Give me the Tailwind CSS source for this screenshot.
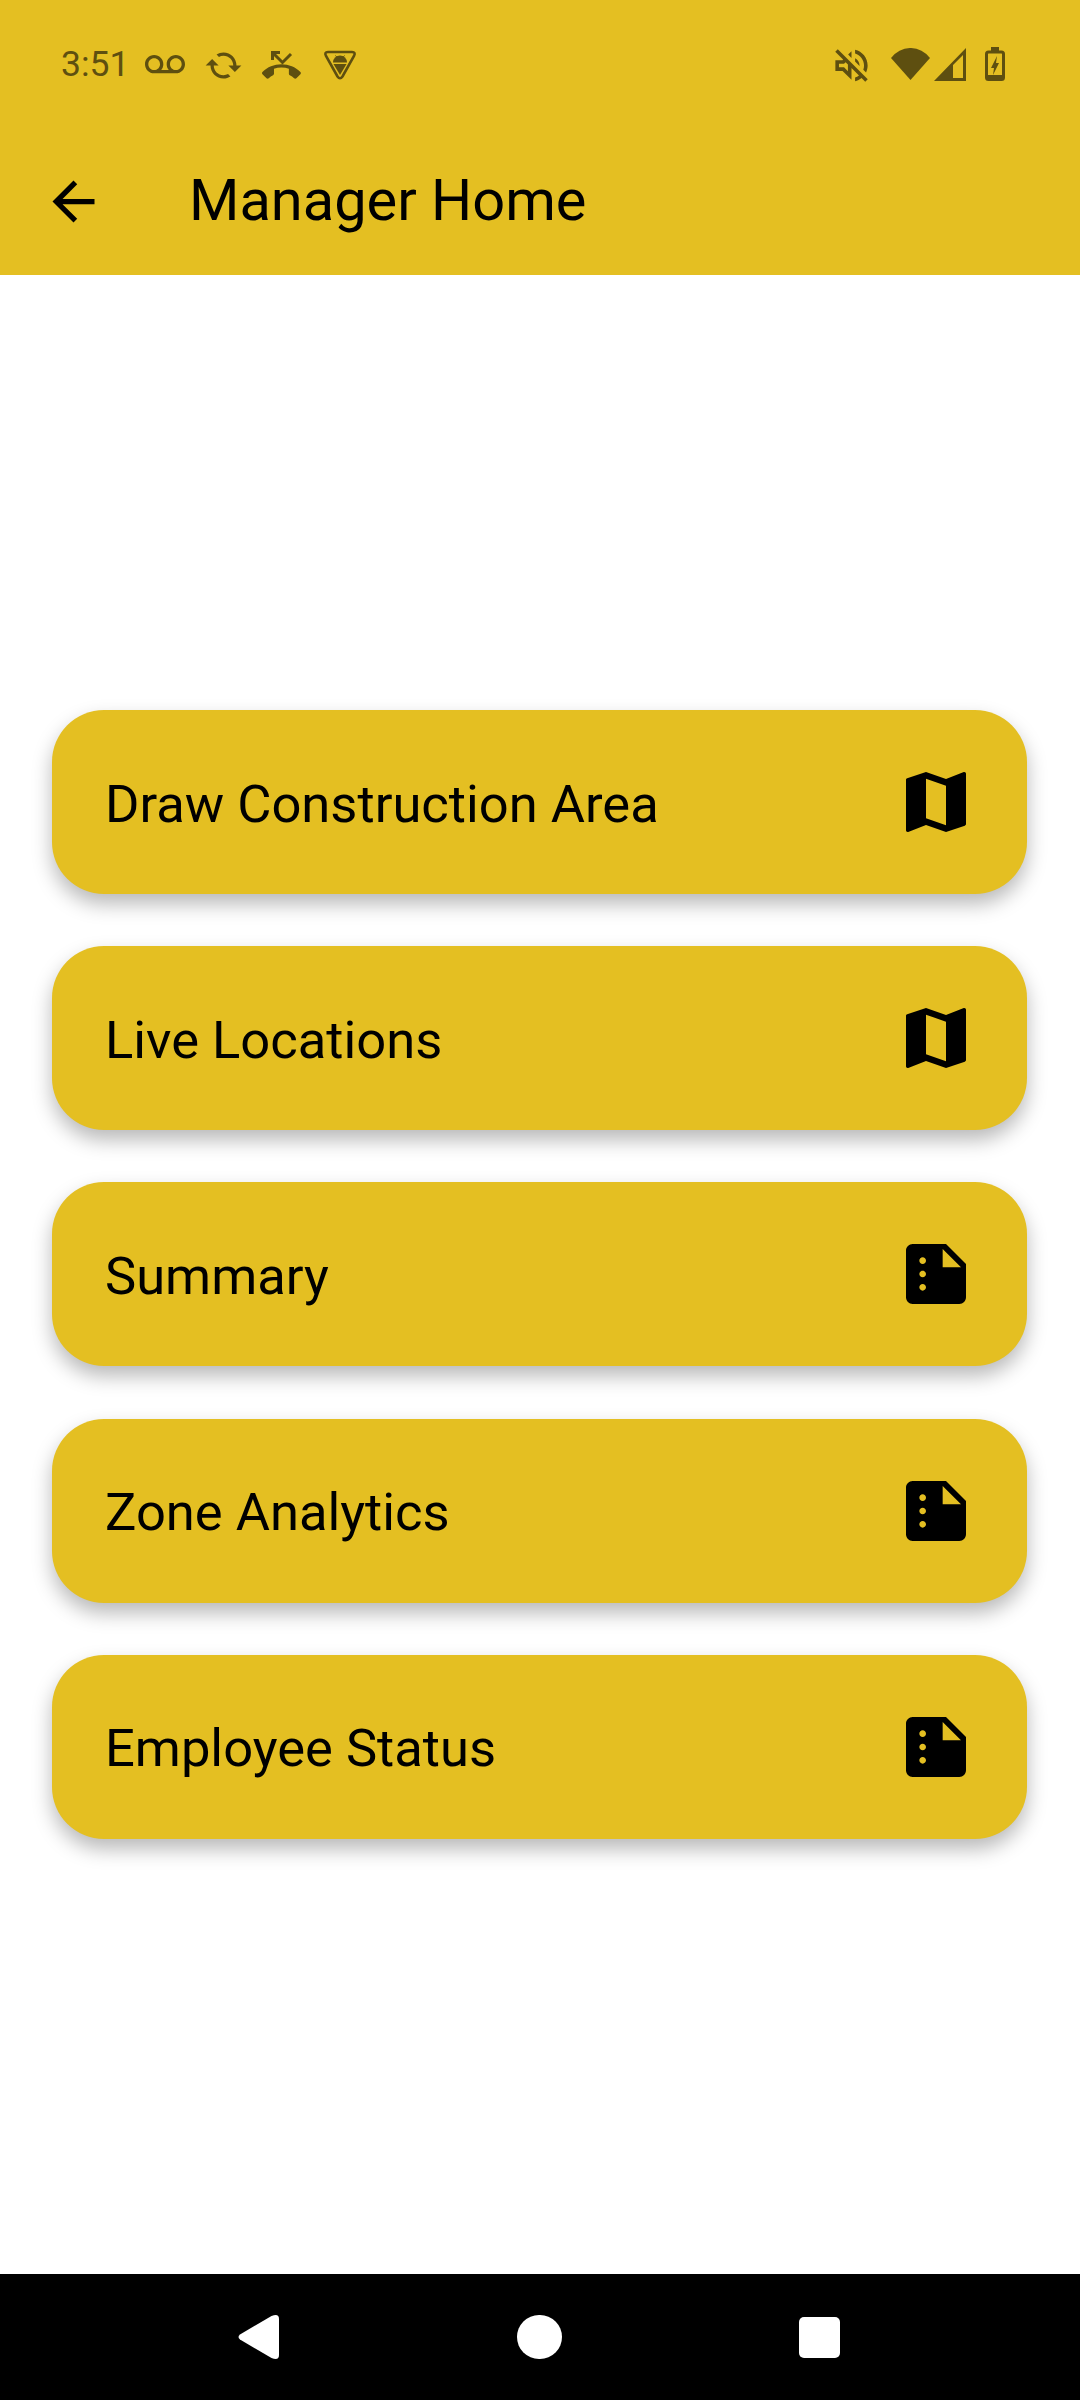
<!DOCTYPE html>
<html lang="en">
<head>
  <meta charset="UTF-8">
  <meta name="viewport" content="width=device-width, initial-scale=1.0">
  <title>Manager Home</title>
  <script src="https://cdn.jsdelivr.net/npm/@tailwindcss/browser@4"></script>
</head>
<body class="font-[Roboto,sans-serif] text-black bg-white">
  <div class="w-[1080px] h-[2400px] flex flex-col overflow-hidden">
    <!-- App bar with status icons -->
    <header class="bg-[#e4bf22] h-[275px] shrink-0">
      <div class="h-[130px] flex items-center justify-between text-[#5e4f10] pl-[61px] pr-[75px]">
        <div class="flex items-center">
          <span class="w-[84px] text-[35.5px] leading-none">3:51</span>
          <!-- voicemail -->
          <svg class="w-[40px] h-[40px] mr-[19px]" viewBox="0 0 24 24" fill="currentColor"><path d="M18.5 6C15.46 6 13 8.46 13 11.5c0 1.33.47 2.55 1.26 3.5H9.74c.79-.95 1.26-2.17 1.26-3.5C11 8.46 8.54 6 5.5 6S0 8.46 0 11.5 2.46 17 5.5 17h13c3.04 0 5.5-2.46 5.5-5.5S21.54 6 18.5 6zm-13 9C3.57 15 2 13.43 2 11.5S3.57 8 5.5 8 9 9.57 9 11.5 7.43 15 5.5 15zm13 0c-1.93 0-3.5-1.57-3.5-3.5S16.57 8 18.5 8 22 9.57 22 11.5 20.43 15 18.5 15z"/></svg>
          <!-- sync -->
          <svg class="w-[39px] h-[39px] mr-[19px]" viewBox="0 0 24 24" fill="currentColor"><path transform="rotate(90 12 12) translate(24 0) scale(-1 1)" d="M12 4V1L8 5l4 4V6c3.31 0 6 2.69 6 6 0 1.01-.25 1.97-.7 2.8l1.46 1.46C19.54 15.03 20 13.57 20 12c0-4.42-3.58-8-8-8zm0 14c-3.31 0-6-2.69-6-6 0-1.01.25-1.97.7-2.8L5.24 7.74C4.46 8.97 4 10.43 4 12c0 4.42 3.58 8 8 8v3l4-4-4-4v3z"/></svg>
          <!-- missed call -->
          <svg class="w-[39px] h-[28px] mr-[22px]" viewBox="0 0 39 28" fill="currentColor"><path transform="translate(0 2) scale(1.62)" d="M12 9c-1.6 0-3.15.25-4.6.72v3.1c0 .39-.23.74-.56.9-.98.49-1.87 1.12-2.66 1.85-.18.18-.43.28-.7.28-.28 0-.53-.11-.71-.29L.29 13.08c-.18-.17-.29-.42-.29-.7 0-.28.11-.53.29-.71C3.34 8.78 7.46 7 12 7s8.66 1.78 11.71 4.67c.18.18.29.43.29.71 0 .28-.11.53-.29.71l-2.48 2.48c-.18.18-.43.29-.71.29-.27 0-.52-.11-.7-.28-.79-.74-1.69-1.36-2.67-1.85-.33-.16-.56-.5-.56-.9v-3.1C15.15 9.25 13.6 9 12 9z"/><path d="M18 1.5H10.5V9M11 2l9.5 9.5L29 3" fill="none" stroke="currentColor" stroke-width="3"/></svg>
          <!-- trust agent shield -->
          <svg class="w-[34px] h-[30px]" viewBox="0 0 34 30" fill="currentColor"><path d="M5 2H29Q33 2 31 6L19.5 26.5Q17 30 14.5 26.5L3 6Q1 2 5 2Z" fill="none" stroke="currentColor" stroke-width="2.6"/><path d="M10 12.5A7 7 0 0 1 24 12.5Z"/><path d="M12.500 5.500L14.500 8M21.500 5.500L19.500 8" fill="none" stroke="currentColor" stroke-width="1"/><path d="M10.500 14H23.500L17 25Z"/></svg>
        </div>
        <div class="flex items-center">
          <!-- muted speaker -->
          <svg class="w-[43px] h-[43px] mr-[18px]" viewBox="0 0 24 24" fill="currentColor"><path d="M4.34 2.93L2.93 4.34 7.29 8.7 7 9H3v6h4l5 5v-6.59l4.18 4.18c-.65.49-1.38.88-2.18 1.11v2.06c1.34-.3 2.57-.92 3.61-1.75l2.05 2.05 1.41-1.41L4.34 2.93zM10 15.17L7.83 13H5v-2h2.83l.88-.88L10 11.41v3.76zM19 12c0 .82-.15 1.61-.41 2.34l1.53 1.53c.56-1.17.88-2.48.88-3.87 0-4.28-2.99-7.86-7-8.77v2.06c2.89.86 5 3.54 5 6.71zm-7-8l-1.88 1.88L12 7.76zm4.5 8c0-1.77-1.02-3.29-2.5-4.03v1.79l2.48 2.48c.01-.08.02-.16.02-.24z"/></svg>
          <!-- wifi -->
          <svg class="w-[39px] h-[32px] mr-[4px] -translate-y-[1px]" viewBox="0 0 39 32" fill="currentColor"><path d="M0 10A24 24 0 0 1 39 10L19.5 32Z"/></svg>
          <!-- cell signal -->
          <svg class="w-[32px] h-[33px] mr-[19px] -translate-y-[1px]" viewBox="0 0 32 33" fill="currentColor"><path fill-rule="evenodd" d="M0 33L32 0V33ZM19 30H29V7L19 17Z"/></svg>
          <!-- charging battery -->
          <svg class="w-[20px] h-[34px] -translate-y-[1px]" viewBox="0 0 20 34" fill="currentColor"><path d="M6 0H14V4H6Z"/><rect x="1.5" y="5" width="17" height="27.5" rx="2" fill="none" stroke="currentColor" stroke-width="3"/><path d="M12 9L6 21H9L8 28L14 16H11Z"/><path d="M1 28H19V33H1Z"/></svg>
        </div>
      </div>
      <div class="h-[145px] flex items-start">
        <div class="w-[189px] h-[142px] flex items-center pl-[42px]">
          <svg class="w-[63px] h-[63px]" viewBox="0 0 24 24" fill="currentColor"><path d="M20 11H7.83l5.59-5.59L12 4l-8 8 8 8 1.41-1.41L7.83 13H20v-2z"/></svg>
        </div>
        <h1 class="text-[57.75px] leading-[140px] font-normal">Manager Home</h1>
      </div>
    </header>

    <!-- Menu cards -->
    <main class="flex-1 flex flex-col gap-[52.2px] pt-[435px] pl-[52px] pr-[53px]">
      <a class="h-[184px] rounded-[52px] bg-[#e4bf22] shadow-[0_10px_20px_rgba(0,0,0,0.28)] flex items-center justify-between pl-[53px] pr-[51px] text-[52.5px]">
        <span class="pt-[4px]">Draw Construction Area</span>
        <svg class="w-[80px] h-[80px]" viewBox="0 0 24 24" fill="currentColor"><path d="M20.5 3l-.16.03L15 5.1 9 3 3.36 4.9c-.21.07-.36.25-.36.48V20.5c0 .28.22.5.5.5l.16-.03L9 18.9l6 2.1 5.64-1.9c.21-.07.36-.25.36-.48V3.5c0-.28-.22-.5-.5-.5zM15 19l-6-2.11V5l6 2.11V19z"/></svg>
      </a>
      <a class="h-[184px] rounded-[52px] bg-[#e4bf22] shadow-[0_10px_20px_rgba(0,0,0,0.28)] flex items-center justify-between pl-[53px] pr-[51px] text-[52.5px]">
        <span class="pt-[4px]">Live Locations</span>
        <svg class="w-[80px] h-[80px]" viewBox="0 0 24 24" fill="currentColor"><path d="M20.5 3l-.16.03L15 5.1 9 3 3.36 4.9c-.21.07-.36.25-.36.48V20.5c0 .28.22.5.5.5l.16-.03L9 18.9l6 2.1 5.64-1.9c.21-.07.36-.25.36-.48V3.5c0-.28-.22-.5-.5-.5zM15 19l-6-2.11V5l6 2.11V19z"/></svg>
      </a>
      <a class="h-[184px] rounded-[52px] bg-[#e4bf22] shadow-[0_10px_20px_rgba(0,0,0,0.28)] flex items-center justify-between pl-[53px] pr-[51px] text-[52.5px]">
        <span class="pt-[4px]">Summary</span>
        <svg class="w-[80px] h-[80px]" viewBox="0 0 24 24" fill="currentColor"><path d="M15 3H5c-1.1 0-2 .9-2 2v14c0 1.1.9 2 2 2h14c1.1 0 2-.9 2-2V9l-6-6zM8 17c-.55 0-1-.45-1-1s.45-1 1-1 1 .45 1 1-.45 1-1 1zm0-4c-.55 0-1-.45-1-1s.45-1 1-1 1 .45 1 1-.45 1-1 1zm0-4c-.55 0-1-.45-1-1s.45-1 1-1 1 .45 1 1-.45 1-1 1zm6 1V4.5l5.5 5.5H14z"/></svg>
      </a>
      <a class="h-[184px] rounded-[52px] bg-[#e4bf22] shadow-[0_10px_20px_rgba(0,0,0,0.28)] flex items-center justify-between pl-[53px] pr-[51px] text-[52.5px]">
        <span class="pt-[4px]">Zone Analytics</span>
        <svg class="w-[80px] h-[80px]" viewBox="0 0 24 24" fill="currentColor"><path d="M15 3H5c-1.1 0-2 .9-2 2v14c0 1.1.9 2 2 2h14c1.1 0 2-.9 2-2V9l-6-6zM8 17c-.55 0-1-.45-1-1s.45-1 1-1 1 .45 1 1-.45 1-1 1zm0-4c-.55 0-1-.45-1-1s.45-1 1-1 1 .45 1 1-.45 1-1 1zm0-4c-.55 0-1-.45-1-1s.45-1 1-1 1 .45 1 1-.45 1-1 1zm6 1V4.5l5.5 5.5H14z"/></svg>
      </a>
      <a class="h-[184px] rounded-[52px] bg-[#e4bf22] shadow-[0_10px_20px_rgba(0,0,0,0.28)] flex items-center justify-between pl-[53px] pr-[51px] text-[52.5px]">
        <span class="pt-[4px]">Employee Status</span>
        <svg class="w-[80px] h-[80px]" viewBox="0 0 24 24" fill="currentColor"><path d="M15 3H5c-1.1 0-2 .9-2 2v14c0 1.1.9 2 2 2h14c1.1 0 2-.9 2-2V9l-6-6zM8 17c-.55 0-1-.45-1-1s.45-1 1-1 1 .45 1 1-.45 1-1 1zm0-4c-.55 0-1-.45-1-1s.45-1 1-1 1 .45 1 1-.45 1-1 1zm0-4c-.55 0-1-.45-1-1s.45-1 1-1 1 .45 1 1-.45 1-1 1zm6 1V4.5l5.5 5.5H14z"/></svg>
      </a>
    </main>

    <!-- System navigation bar -->
    <nav class="bg-black h-[126px] shrink-0 flex items-center justify-between pl-[238px] pr-[240px]">
      <svg class="w-[41px] h-[44px]" viewBox="0 0 41 44" fill="#fff"><path d="M2 19.5L33.5 1Q41 -2 41 4V40Q41 46 33.5 43L2 24.5Q-1 22 2 19.5Z"/></svg>
      <div class="w-[45px] h-[44px] rounded-full bg-white"></div>
      <div class="w-[41px] h-[41px] rounded-[5px] bg-white"></div>
    </nav>
  </div>
</body>
</html>
